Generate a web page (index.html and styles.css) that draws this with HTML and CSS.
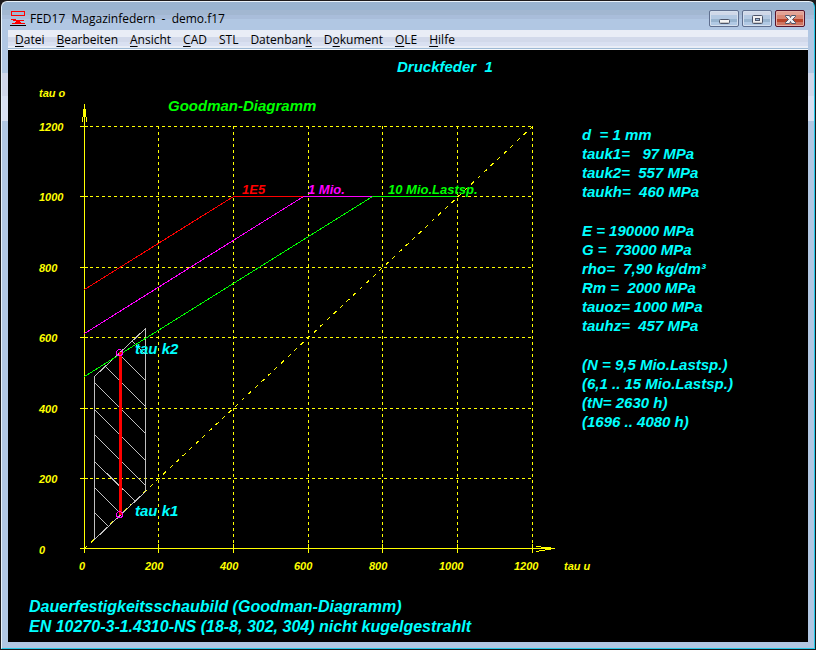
FILE: index.html
```html
<!DOCTYPE html>
<html lang="de">
<head>
<meta charset="utf-8">
<title>FED17 Magazinfedern - demo.f17</title>
<link rel="stylesheet" href="styles.css">
</head>
<body>
<div class="window">
  <header class="titlebar">
    <svg class="app-icon" viewBox="0 0 16 16" aria-hidden="true">
      <g fill="none" stroke="#f00" stroke-width="1" shape-rendering="crispEdges">
        <path d="M1.500 1.500h13v4h-13z"/>
        <path d="M1 9.500h5M3 10.500h6M6 11.500h4M9 10.500h5M5 12.500h6M2 13.500h7M9 13.500h6"/>
      </g>
      <path d="M0 15.500h16" stroke="#000" stroke-width="1"/>
    </svg>
    <h1 class="caption">FED17  Magazinfedern  -  demo.f17</h1>
    <div class="controls">
      <button class="control" type="button" aria-label="Minimieren">
        <svg viewBox="0 0 30 16"><rect x="10.500" y="8.500" width="10" height="4" rx="1" fill="#f4f4f4" stroke="#4d566b"/><path d="M11 11.500h9" stroke="#c8c8c8"/></svg>
      </button>
      <button class="control" type="button" aria-label="Maximieren">
        <svg viewBox="0 0 30 16"><rect x="10.500" y="4.500" width="10" height="8" rx="1" fill="#f0f0f2" stroke="#4d566b"/><path d="M11 11.500h9" stroke="#c8c8c8"/><rect x="13.500" y="7.500" width="4" height="2" fill="#9db9d8" stroke="#4d566b"/></svg>
      </button>
      <button class="control close" type="button" aria-label="Schließen">
        <svg viewBox="0 0 30 16"><path d="M10.500 4.500h4l1 2 1-2h4v1l-3 3 3 3v1h-4l-1-2-1 2h-4v-1l3-3-3-3z" fill="#f0f0f2" stroke="#4d566b" stroke-linejoin="round"/></svg>
      </button>
    </div>
  </header>
  <nav class="menubar">
    <button type="button"><u>D</u>atei</button>
    <button type="button"><u>B</u>earbeiten</button>
    <button type="button"><u>A</u>nsicht</button>
    <button type="button"><u>C</u>AD</button>
    <button type="button">STL</button>
    <button type="button">Datenban<u>k</u></button>
    <button type="button">D<u>o</u>kument</button>
    <button type="button"><u>O</u>LE</button>
    <button type="button"><u>H</u>ilfe</button>
  </nav>
  <main class="drawing">
    <h2 class="part-name">Druckfeder  1</h2>
    <svg class="chart" viewBox="8 80 574 500" role="img" aria-label="Goodman-Diagramm">
      <g class="grid">
        <path d="M84 126.500H532M84 196.500H532M84 267.500H532M84 337.500H532M84 408.500H532M84 478.500H532"/>
        <path d="M158.500 126V548M233.500 126V548M308.500 126V548M382.500 126V548M457.500 126V548M532.500 126V548"/>
        <path class="bisector" d="M84.500 548.500L532.500 126.500"/>
      </g>
      <g class="axes">
        <path d="M84.500 104V553M80 548.500H555"/>
        <path d="M80 126.500h8M80 196.500h8M80 267.500h8M80 337.500h8M80 408.500h8M80 478.500h8"/>
        <path d="M158.500 544v9M233.500 544v9M308.500 544v9M382.500 544v9M457.500 544v9M532.500 544v9"/>
        <path d="M83.500 109v8M85.500 109v8M82.500 117v5M86.500 117v5"/>
        <path d="M536 546.500h5M541 547.500h10M545 549.500h6M539 550.500h6M536 551.500h3"/>
      </g>
      <g class="hatch">
        <path d="M94.500 539.500V376.500L145.500 328.500V491.500Z"/>
        <path d="M132.500 341.500l13 13M119.500 354.500l26 26M105.500 366.500l40 40M94.500 382.500l51 51M94.500 409.500l51 51M94.500 434.500l51 51M94.500 461.500l41 40M94.500 487.500l26 26M94.500 512.500l14 14"/>
      </g>
      <g class="limit">
        <path stroke="#f00" d="M84.500 289.500L233.500 196.500H303"/>
        <path stroke="#f0f" d="M84.500 333.500L303.500 196.500H372"/>
        <path stroke="#0f0" d="M84.500 376.500L372.500 196.500H457"/>
      </g>
      <path class="stroke-range" d="M120.500 352V515"/>
      <g class="marks"><circle cx="119.500" cy="352.500" r="3"/><circle cx="119.500" cy="514.500" r="3"/></g>
      <g class="scale">
        <text x="39" y="97">tau o</text>
        <text x="39" y="131">1200</text>
        <text x="39" y="201">1000</text>
        <text x="39" y="272">800</text>
        <text x="39" y="342">600</text>
        <text x="39" y="413">400</text>
        <text x="39" y="483">200</text>
        <text x="39" y="554">0</text>
        <text x="79" y="570">0</text>
        <text x="145" y="570">200</text>
        <text x="220" y="570">400</text>
        <text x="294" y="570">600</text>
        <text x="369" y="570">800</text>
        <text x="439" y="570">1000</text>
        <text x="514" y="570">1200</text>
        <text x="564" y="570">tau u</text>
      </g>
      <text class="chart-title" x="168" y="111">Goodman-Diagramm</text>
      <g class="limit-label">
        <text fill="#f00" x="242" y="194">1E5</text>
        <text fill="#f0f" x="308" y="194">1 Mio.</text>
        <text fill="#0f0" x="388" y="194">10 Mio.Lastsp.</text>
      </g>
      <g class="point-label">
        <text x="135" y="354">tau k2</text>
        <text x="135" y="516">tau k1</text>
      </g>
    </svg>
    <section class="values">
      <p>d  = 1 mm
tauk1=   97 MPa
tauk2=  557 MPa
taukh=  460 MPa</p>
      <p>E = 190000 MPa
G =  73000 MPa
rho=  7,90 kg/dm³
Rm =  2000 MPa
tauoz= 1000 MPa
tauhz=  457 MPa</p>
      <p>(N = 9,5 Mio.Lastsp.)
(6,1 .. 15 Mio.Lastsp.)
(tN= 2630 h)
(1696 .. 4080 h)</p>
    </section>
    <footer class="legend">
      <p>Dauerfestigkeitsschaubild (Goodman-Diagramm)</p>
      <p>EN 10270-3-1.4310-NS (18-8, 302, 304) nicht kugelgestrahlt</p>
    </footer>
  </main>
</div>
</body>
</html>
```
FILE: styles.css
```css
* { box-sizing: border-box; }
body {
  margin: 0;
  padding: 1px;
  min-height: 100vh;
  display: flex;
  background: #1c1a1c;
  font-family: "Open Sans", "Noto Sans", sans-serif;
  font-size: 12px;
}
.window {
  flex: 1;
  display: flex;
  flex-direction: column;
  padding: 0 6px 6px;
  border: 1px solid #e8f2fa;
  border-right-color: #25c8e8;
  border-bottom-color: #25c8e8;
  border-radius: 6px 6px 0 0;
  background: linear-gradient(#99b4d1 0 8px, #a2b7d1 8px 13px, #a9bdda 13px 17px, #b1c7e3 17px 71px, #d0d7ea 71px 94px, #d8e0f2 94px 119px, #b1c7e3 119px);
}
.titlebar {
  display: flex;
  align-items: flex-start;
  height: 28px;
  padding: 8px 3px 0 2px;
}
.app-icon { width: 16px; height: 16px; }
.caption {
  flex: 1;
  margin: 0 0 0 4px;
  font-size: 12px;
  font-weight: 400;
  line-height: 17px;
  white-space: pre;
}
.controls { display: flex; gap: 3px; }
.control {
  width: 30px;
  height: 17px;
  padding: 0;
  border: 1px solid #5f6f8f;
  border-radius: 2px;
  background: linear-gradient(#d0d8e8 0 4px, #b4c9e2 4px 8px, #98b4cf 8px 11px, #b1c9e4 11px);
  box-shadow: inset 0 0 0 1px #d5e0ee;
}
.control svg { display: block; width: 30px; height: 16px; margin: -1px; }
.close {
  border-color: #57152c;
  background: linear-gradient(#e3a294 0 4px, #d98773 4px 8px, #b9452b 8px 11px, #cf7561 11px);
  box-shadow: inset 0 0 0 1px #e6b0a6;
}
.menubar {
  display: flex;
  height: 20px;
  padding-left: 1px;
  background: linear-gradient(#e9edf6 0 7px, #d2d9ea 7px 12px, #d9e0f1 12px 16px, #e9edf6 16px 18px, #9db9d4 18px 19px, #f4f7fb 19px);
}
.menubar button {
  padding: 0 6px;
  border: 0;
  background: none;
  font: inherit;
  line-height: 20px;
  color: #000;
}
.menubar u { text-underline-offset: 2px; }
.drawing {
  flex: 1;
  display: grid;
  grid-template-columns: minmax(0, 1fr) 226px;
  grid-template-rows: 30px auto 1fr;
  background: #000;
  color: #0ff;
  font: italic bold 16px/20px "Liberation Sans", Arial, sans-serif;
}
.drawing text { font-style: italic; font-weight: bold; }
.part-name {
  grid-column: 1 / -1;
  margin: 0;
  padding: 7px 0 0 389px;
  font-size: 15px;
  white-space: pre;
}
.chart { display: block; width: 100%; overflow: visible; shape-rendering: crispEdges; }
.chart path, .chart circle { fill: none; }
.grid { stroke: #ff0; stroke-dasharray: 3 3; }
.bisector { stroke-dasharray: 4 5; }
.axes { stroke: #ff0; }
.hatch { stroke: #c0c0c0; }
.marks { stroke: #f0f; }
.stroke-range { stroke: #f00; stroke-width: 3; }
.scale { fill: #ff0; font-size: 11px; }
.chart-title { fill: #0f0; font-size: 15px; }
.limit-label { font-size: 13px; }
.point-label { fill: #0ff; font-size: 15px; }
.values { padding-top: 45px; line-height: 19px; font-size: 15px; }
.values p { margin: 0 0 20px; white-space: pre; }
.legend { grid-column: 1 / -1; padding: 17px 21px 0; }
.legend p { margin: 0; }
```
